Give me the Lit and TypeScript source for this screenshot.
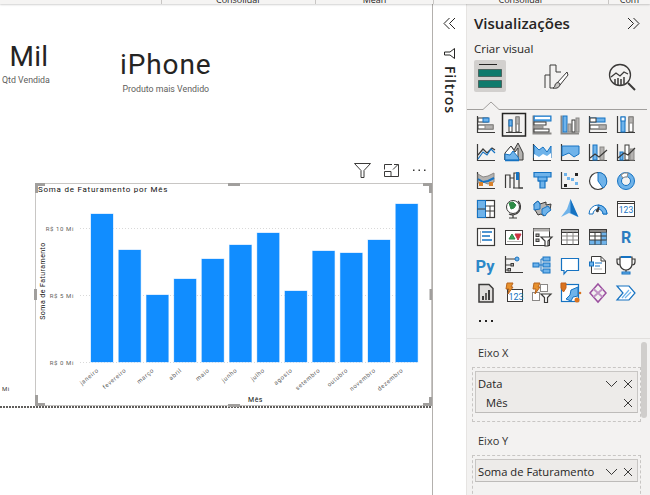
import { LitElement, html, css, svg } from "lit";
import { customElement } from "lit/decorators.js";

const D = "#3b3a39";
const B = "#1673c2";
const L = "#6fb3ea";
const G = "#b5b3b1";
const W = "#ffffff";
const O = "#d9822b";

const r = (x: number, y: number, w: number, h: number, fill = "none", stroke = "none", sw = 1) =>
  svg`<rect x=${x} y=${y} width=${w} height=${h} fill=${fill} stroke=${stroke} stroke-width=${sw}></rect>`;
const p = (d: string, stroke = D, fill = "none", sw = 1) =>
  svg`<path d=${d} stroke=${stroke} fill=${fill} stroke-width=${sw}></path>`;
const axes = p("M5.5 5v16.5H23", D, "none", 1.2);

// the grid of visual types, row by row, drawn in a 28x28 cell
const ICONS = [
  svg`${axes}${r(6, 7, 10, 4, W, D)}${r(11, 7, 6, 4, L, B)}${r(6, 14, 15, 4, W, D)}${r(13, 14, 8, 4, G, "#8a8886")}`,
  svg`${r(2.5, 2.5, 23, 22.5, "none", "#252423", 1.5)}${p("M6 21.5H22")}${r(9, 9, 3, 12, W, D)}${r(9, 9, 3, 6, L, B)}${r(16, 6, 3, 15, W, D)}${r(16, 6, 3, 7, G, "#8a8886")}`,
  svg`${p("M5.5 4.5v18H23.5", "#8a8886", "none", 2)}${r(6, 5, 17, 5, L, B)}${r(7, 6, 15, 2, W)}${r(6, 11, 12, 3, W, D)}${r(6, 15, 9, 2, G, "#8a8886")}${r(6, 18, 15, 3, W, D)}`,
  svg`${p("M5.5 4.5v18H23", "#8a8886", "none", 2)}${r(7, 5, 4, 16, L, B)}${r(12, 13, 3, 8, G, "#8a8886")}${r(16, 9, 3, 12, W, D)}${r(20, 7, 3, 14, G, "#8a8886")}`,
  svg`${axes}${r(6, 7, 15, 4, L, B)}${r(6, 7, 6, 4, W, D)}${r(6, 14, 16, 4, W, D)}${r(15, 14, 7, 4, G, "#8a8886")}`,
  svg`${axes}${r(9, 6, 4, 15, L, B)}${r(9, 6, 4, 4, W, B)}${r(17, 6, 4, 15, W, D)}${r(17, 6, 4, 6, G, "#8a8886")}`,
  svg`${axes}${p("M6 16l5-6 4 4 5-5 3 2", D, "none", 1.2)}${p("M6 20l5-7 4 3 4-6 4 4", B, "none", 1.2)}`,
  svg`${p("M5 21V15l6-8 3 4 4-7 5 10v7z", D, G)}${p("M5 21V14l6-7 4 6 3-4v12z", D, W)}${p("M5 21v-6l5 1 3-4 5 6 1 3z", B, L)}${p("M5 21.5H19", B, "none", 1.5)}`,
  svg`${axes}${p("M6 6l5 5 4-3 4 5 4-6v12H6z", B, L)}${p("M6 15l5 3 4-3 4 2 4-3v7H6z", "none", W)}`,
  svg`${axes}${p("M6 7H23V15l-5 3-5-4-7 3z", B, L)}`,
  svg`${axes}${r(9, 6, 4, 15, L, B)}${r(16, 8, 4, 13, G, "#8a8886")}${p("M6 19l5-4 4 3 8-7", D, "none", 1.2)}`,
  svg`${axes}${r(8, 13, 3, 8, L, B)}${r(13, 6, 4, 15, W, D)}${r(18, 10, 4, 11, G, "#8a8886")}${p("M6 19l6-5 4 2 7-7", D, "none", 1.2)}`,
  svg`${axes}${p("M6 7l5 3 5-1 6-3v9l-6 2-5-2-5 1z", "#8a8886", G)}${p("M6 12l5 3 5-1 6-3", B, "none", 2)}${r(7, 15, 4, 4, O)}${r(17, 15, 4, 4, O)}`,
  svg`${p("M5.5 21V8H10V21M10 21V11H14V21M14 13V6H19V21H23", D, "none", 1.2)}${r(16, 5, 3, 8, B)}${p("M13 21H23", D)}`,
  svg`${p("M6 5.5H23V10H19V14H17V21H12V14H10V10H6z", B, L, 1.2)}${p("M10 10H19M10 14H19", B)}`,
  svg`${axes}${r(8, 6, 3, 3, L)}${r(15, 11, 3, 3, L)}${r(19, 15, 3, 3, L)}${r(11, 10, 3, 3, L)}${r(8, 17, 3, 3, "#252423")}${r(19, 6, 3, 3, "#252423")}`,
  svg`<circle cx="14" cy="14" r="8.5" fill=${W} stroke=${D} stroke-width="1.2"></circle>${p("M14 5.5A8.5 8.5 0 0 1 19 21L14 14z", B, L)}`,
  svg`<circle cx="14" cy="14" r="6.5" fill="none" stroke=${L} stroke-width="4"></circle><circle cx="14" cy="14" r="8.5" fill="none" stroke=${B}></circle><circle cx="14" cy="14" r="4.5" fill="none" stroke=${B}></circle>${p("M9 8A8 8 0 0 1 16 6L15 10A4.5 4.5 0 0 0 11 11z", "#8a8886", W)}`,
  svg`${r(5.5, 5.5, 17, 17, W, D, 1.2)}${r(5.5, 5.5, 8, 17, L, B)}${p("M5.5 14H13.5M13.5 11H22.5M18 11V22.5M13.5 16H22.5", D)}`,
  svg`<circle cx="13" cy="12" r="6.5" fill=${W} stroke=${D}></circle>${p("M9 8l4-1 3 3-2 3-3 1z", "#2e8b47", "#2e8b47")}${p("M18 6a8 8 0 0 1-9 13M13 20v3M9 23H17", D, "none", 1.2)}`,
  svg`${p("M6 9l4-3 2 3 6-2v3l5-1-1 6-4 2-2 4-3-2-3 1-3-5z", D, G)}${p("M6 9l4-3 2 3v5l-6 1z", B, L)}${p("M14 14l6-3 3 4-4 3-2 3-3-2z", B, L)}`,
  svg`${p("M14.5 4L11 14 5 22l8-4 9 4-4-9z", "none", L)}${p("M14.5 4V18l8 4-4-9z", "none", B)}`,
  svg`${p("M5 19a9 9 0 0 1 18 0H19a5 5 0 0 0-10 0z", B, W)}${p("M14 10a9 9 0 0 1 9 9H19a5 5 0 0 0-5-5z", B, L)}${p("M12 16l3-4-1 5z", D, D)}`,
  svg`${r(5.5, 6.5, 17, 15, W, D)}${p("M5.5 8.5H22.5", D, "none", 1)}<text x="14" y="18" text-anchor="middle" font-family="Roboto, sans-serif" font-size="8.5" fill=${B}>123</text>`,
  svg`${r(5.5, 5.5, 17, 17, W, D, 1.2)}${p("M8.5 8V20", G)}${p("M10 9H20M10 13H18M10 17H20", B, "none", 1.7)}`,
  svg`${r(5.5, 7.5, 17, 14, W, D)}${p("M9 16l3-5 3 5z", "#2e8b47", "#3aa35a")}${p("M15 11h6l-3 6z", "#c4314b", "#d13438")}${p("M7 18.5H21", G)}`,
  svg`${r(5.5, 5.5, 16, 17, W, D)}${r(5.5, 5.5, 16, 3, G)}${r(8, 11, 3, 2.5, G, D)}${r(8, 16, 3, 2.5, G, D)}${p("M13 14H24L20 18V23H17V18z", D, W, 1.2)}`,
  svg`${r(5.5, 6.5, 17, 15, W, D)}${r(5.5, 6.5, 17, 3, G, D)}${p("M5.5 13H22.5M5.5 17H22.5M11 9.5V21.5M17 9.5V21.5", "#8a8886")}`,
  svg`${r(5.5, 6.5, 17, 15, W, D)}${r(5.5, 6.5, 17, 3, "#8a8886", D)}${r(17, 9.5, 5.5, 12, L)}${r(5.5, 17, 17, 4.5, L)}${p("M5.5 13H22.5M5.5 17H22.5M11 9.5V21.5M17 9.5V21.5", D)}`,
  svg`<text x="14" y="20" text-anchor="middle" font-family="Roboto, sans-serif" font-weight="700" font-size="16" fill="#2b7cc0">R</text>`,
  svg`<text x="13" y="21" text-anchor="middle" font-family="Roboto, sans-serif" font-weight="700" font-size="16.5" fill="#2b88c8">Py</text>`,
  svg`${axes}${p("M5.5 8H15M5.5 14H11M5.5 19H8", D)}<circle cx="17" cy="8" r="2" fill=${L} stroke=${B}></circle>${r(11, 12.5, 2.5, 2.5, G, D)}${r(8, 17.5, 2.5, 2.5, G, D)}`,
  svg`${r(5, 12, 6, 4, L, B)}${r(15, 6, 7, 4, L, B)}${r(15, 12, 7, 4, L, B)}${r(15, 18, 7, 4, L, B)}${p("M11 14H15M13 8V20M13 8H15M13 20H15", B)}`,
  svg`${p("M5.5 7.5H22.5V19.5H11L8 23V19.5H5.5z", B, W, 1.2)}`,
  svg`${p("M7.5 5.5H17L21.5 10V22.5H7.5z", D, W)}${p("M17 5.5V10H21.5", D)}${r(5.5, 11, 4, 4, L, B)}${p("M11 12H18M11 15H16", B)}${p("M10 18H18", G)}`,
  svg`${p("M8 6H20V13A6 6 0 0 1 8 13z", D, W, 1.2)}${r(9, 5, 10, 2, B)}${p("M8 8H5V11A3 3 0 0 0 8 14M20 8H23V11A3 3 0 0 1 20 14M14 19V21", D, "none", 1.2)}${r(10, 21, 8, 2, L, B)}`,
  svg`${p("M7 5.5H17L21 9.5V23H7z", D, "#e1dfdd", 1.5)}${r(10, 17, 2, 4, D)}${r(13, 14, 2, 7, "#605e5c")}${r(16, 11, 2, 10, D)}`,
  svg`${r(7.5, 10.5, 15, 12, W, D)}<text x="16" y="20.5" text-anchor="middle" font-family="Roboto, sans-serif" font-size="9" fill=${B}>123</text>${p("M7 4h6l-2 4h2l-5 7 1-5H6z", "#b8651d", "#e8912d")}`,
  svg`${r(12.5, 5.5, 7, 7, W, "#8a8886")}${r(4.5, 13.5, 7, 8, W, "#8a8886")}${p("M13 15H23L19.5 18.5V23.5H16.5V18.5z", D, W, 1.2)}${p("M6 4h6l-2 4h2l-5 7 1-5H5z", "#b8651d", "#e8912d")}`,
  svg`${r(5.5, 5.5, 17, 17, W, B, 1.2)}${p("M10 20l4-4 1-5 7-3v9l-5 1-2 4z", B, L)}${p("M5 4h5v5l-2.5 4L5 9z", "#c5611a", "#d9731f")}<circle cx="21" cy="21" r="2.5" fill="#d9731f"></circle><circle cx="24" cy="14" r="1.3" fill="#d9731f"></circle>`,
  svg`${p("M14 5l8 9-8 9-8-9z", "#9b4f9f", "none", 1.5)}${p("M9.5 10l9 8M18.5 10l-9 8", "#c193c5", "none", 2)}`,
  svg`${p("M5 7H17L23 14 17 21H5L11 14z", B, W, 1.2)}${p("M13 19l6-6M10 19l7-8", L, "none", 1.2)}`,
  svg`${r(7, 13, 2, 2, "#252423")}${r(13, 13, 2, 2, "#252423")}${r(19, 13, 2, 2, "#252423")}`,
];

const MONTHS = [
  ["janeiro", 214], ["fevereiro", 250], ["março", 295], ["abril", 279],
  ["maio", 259], ["junho", 245], ["julho", 233], ["agosto", 291],
  ["setembro", 251], ["outubro", 253], ["novembro", 240], ["dezembro", 204],
] as [string, number][];

const X = svg`<path d="M1 1l8 8M9 1l-8 8" stroke="#3b3a39" fill="none"></path>`;
const V = svg`<path d="M1 2l5.5 5.5L12 2" stroke="#3b3a39" fill="none"></path>`;

@customElement("app-root")
export class AppRoot extends LitElement {
  static styles = css`
    :host {
      display: block;
      width: 650px;
      height: 495px;
      overflow: hidden;
      background: #fff;
      font-family: "Open Sans", "Noto Sans", sans-serif;
      color: #252423;
    }
    .ribbon {
      height: 4px;
      background: #f5f4f3;
      box-shadow: 0 1px 2px rgba(0, 0, 0, 0.18);
      position: relative;
      z-index: 2;
      overflow: hidden;
      display: flex;
    }
    .rib-cell {
      box-sizing: border-box;
      height: 4px;
      border-right: 1px solid #c8c6c4;
      font: 9px/1 "Open Sans", sans-serif;
      text-align: center;
      color: #252423;
    }
    .rib-cell span {
      display: block;
      margin-top: -5px;
    }
    .main {
      display: flex;
      height: 491px;
    }
    .canvas {
      position: relative;
      width: 433px;
      box-sizing: border-box;
      border-right: 1px solid #b3b0ad;
      flex: none;
      overflow: hidden;
    }
    .kpi {
      position: absolute;
      font-family: Roboto, sans-serif;
      text-align: center;
      white-space: nowrap;
    }
    .kpi b {
      display: block;
      font-weight: 400;
      font-size: 28px;
      line-height: 30px;
      letter-spacing: 0.9px;
      color: #252423;
    }
    .kpi small {
      display: block;
      font-size: 8.8px;
      line-height: 11px;
      margin-top: 4px;
      color: #605e5c;
    }
    .mil {
      left: 2px;
      top: 38px;
    }
    .mil b {
      padding-left: 6px;
      letter-spacing: 0.3px;
    }
    .mil small {
      margin-top: 3px;
    }
    .iphone {
      left: 120px;
      top: 46px;
    }
    .tools {
      position: absolute;
      left: 354px;
      top: 159px;
      display: flex;
      align-items: center;
      gap: 13px;
    }
    .tools svg {
      display: block;
    }
    .chart {
      position: absolute;
      left: 0;
      top: 0;
    }
    .chart text {
      font-family: Roboto, sans-serif;
    }
    .tick {
      font-size: 6px;
      letter-spacing: 0.6px;
      fill: #605e5c;
    }
    .ttl {
      font-size: 8px;
      letter-spacing: 0.75px;
      fill: #111;
    }
    .axis-ttl {
      font-size: 7px;
      letter-spacing: 0.45px;
      fill: #111;
    }
    .filters {
      width: 33px;
      flex: none;
      display: flex;
      flex-direction: column;
      align-items: center;
      background: #fff;
    }
    .filters svg {
      display: block;
    }
    .filters .collapse {
      margin-top: 13px;
    }
    .filters .funnel {
      margin-top: 18px;
    }
    .filters span {
      writing-mode: vertical-rl;
      font-size: 14px;
      font-weight: 600;
      letter-spacing: 0.8px;
      line-height: 20px;
      margin-top: 7px;
      color: #252423;
    }
    .panel {
      flex: 1;
      background: #f3f2f1;
      position: relative;
      box-sizing: border-box;
      border-left: 1px solid #e6e4e2;
    }
    .head {
      display: flex;
      align-items: center;
      justify-content: space-between;
      height: 20px;
      margin-top: 9px;
      padding: 0 10px 0 7px;
      font-size: 15px;
      font-weight: 600;
      color: #252423;
    }
    .sub {
      margin: 8px 0 0 7px;
      font-size: 11.5px;
      line-height: 16px;
      color: #252423;
    }
    .tabs {
      display: flex;
      margin: 3px 0 0 7px;
      height: 32px;
    }
    .tab {
      width: 32px;
      height: 32px;
      flex: none;
      border-radius: 2px;
    }
    .tab.on {
      background: #d2d0ce;
    }
    .tab + .tab {
      margin-left: 34px;
    }
    .tab svg {
      display: block;
    }
    .notch {
      display: block;
      margin-top: 9px;
    }
    .grid {
      display: grid;
      grid-template-columns: repeat(6, 28px);
      grid-auto-rows: 28px;
      margin: 1px 0 0 5px;
    }
    .grid svg {
      display: block;
    }
    .fields {
      margin-top: 3px;
      border-top: 1px solid #e1dfdd;
      padding: 6px 9px 0 5px;
    }
    .label {
      font-size: 11px;
      line-height: 16px;
      margin-left: 6px;
      color: #323130;
    }
    .well {
      border: 1px dashed #c8c6c4;
      padding: 3px 2px;
      margin-top: 6px;
      height: 36px;
      box-sizing: content-box;
    }
    .well.tall {
      height: 47px;
    }
    .well + .label {
      margin-top: 11px;
    }
    .field {
      background: #edebe9;
      border: 1px solid #c8c6c4;
      border-bottom-color: #bdbbb9;
      padding: 2px 4px 0 2px;
      font-size: 11.2px;
    }
    .row {
      display: flex;
      align-items: center;
      height: 19px;
      gap: 5px;
      color: #252423;
    }
    .row span {
      flex: 1;
      white-space: nowrap;
    }
    .row.child span {
      padding-left: 8px;
    }
    .row svg {
      flex: none;
      display: block;
    }
    .thumb {
      position: absolute;
      right: 3px;
      top: 338px;
      width: 6px;
      height: 76px;
      border-radius: 3px;
      background: #d0cecc;
    }
  `;

  chart() {
    const handle = "#a19f9d";
    return html`<svg class="chart" width="432" height="420" viewBox="0 0 432 420">
      ${svg`
      <rect x="35.5" y="179.5" width="396" height="222" fill="#fff" stroke="#c8c6c4"></rect>
      <text class="ttl" x="38" y="188">Soma de Faturamento por Mês</text>
      ${[224, 291, 358].map((y) => svg`<path d="M80 ${y}.5H419" stroke="#d9d9d9" stroke-dasharray="1 2"></path>`)}
      <text class="tick" x="74" y="226.5" text-anchor="end">R$ 10 Mi</text>
      <text class="tick" x="74" y="293.5" text-anchor="end">R$ 5 Mi</text>
      <text class="tick" x="74" y="360.5" text-anchor="end">R$ 0 Mi</text>
      <text class="axis-ttl" transform="translate(45 277) rotate(-90)" text-anchor="middle">Soma de Faturamento</text>
      ${MONTHS.map(([name, top], i) => {
        const x = 91 + i * 27.7;
        const y = top - 4;
        return svg`
          <rect x=${x - 0.5} y=${y - 0.5} width="23" height=${359 - y} fill="#b9dcff"></rect>
          <rect x=${x} y=${y} width="22" height=${358 - y} fill="#118dff"></rect>
          <text class="tick" text-anchor="end" transform="translate(${x + 8} 367) rotate(-40)">${name}</text>`;
      })}
      <text class="axis-ttl" x="255.5" y="398" text-anchor="middle">Mês</text>
      <path d="M0 403H432" stroke="#605e5c" stroke-width="2" stroke-dasharray="2 1"></path>
      <path d="M45 180.5H36.5V189" stroke=${handle} stroke-width="3" fill="none"></path>
      <path d="M423 180.5H430.5V189" stroke=${handle} stroke-width="3" fill="none"></path>
      <path d="M36.5 391V400.5H45" stroke=${handle} stroke-width="3" fill="none"></path>
      <path d="M430.5 393V400.5H423" stroke=${handle} stroke-width="3" fill="none"></path>
      <path d="M228 180.5H240M228 401.5H240M35.5 285V296M431 285V296" stroke=${handle} stroke-width="3"></path>
      <text class="tick" x="2" y="387" style="fill:#3b3a39">Mi</text>
      `}
    </svg>`;
  }

  render() {
    return html`
      <div class="ribbon">
        <div class="rib-cell" style="width:162px"></div>
        <div class="rib-cell" style="width:154px"><span>Consolidar</span></div>
        <div class="rib-cell" style="width:118px"><span>Mean</span></div>
        <div class="rib-cell" style="width:175px"><span>Consolidar</span></div>
        <div class="rib-cell" style="width:41px;border:0"><span>Com</span></div>
      </div>
      <div class="main">
        <div class="canvas">
          ${this.chart()}
          <div class="kpi mil"><b>Mil</b><small>Qtd Vendida</small></div>
          <div class="kpi iphone"><b>iPhone</b><small>Produto mais Vendido</small></div>
          <div class="tools">
            <svg width="17" height="15" viewBox="0 0 17 15"><path d="M.5.5h16L10 7.5V14.5H7V7.5z" fill="none" stroke="#3b3a39"></path></svg>
            <svg width="15" height="13" viewBox="0 0 15 13"><path d="M.5 5.5V.5H8M14.5 5V12.5H7M.5 7.5H7V12.5H.5zM9 5.5L14 .5M10 .5H14.5V5" fill="none" stroke="#3b3a39"></path></svg>
            <svg width="15" height="3" viewBox="0 0 15 3"><path d="M1 .5h1.5v1.5H1zM6.5 .5H8v1.5H6.5zM12 .5h1.500v1.500H12z" fill="#3b3a39"></path></svg>
          </div>
        </div>
        <div class="filters">
          <svg class="collapse" width="13" height="13" viewBox="0 0 13 13"><path d="M6.500 1L1 6.500 6.500 12M12 1L6.500 6.500 12 12" fill="none" stroke="#252423"></path></svg>
          <svg class="funnel" width="11" height="11" viewBox="0 0 11 11"><path d="M10.500 .5V10.500L6 7H.5V4H6z" fill="none" stroke="#252423"></path></svg>
          <span>Filtros</span>
        </div>
        <div class="panel">
          <div class="head">
            <span>Visualizações</span>
            <svg width="13" height="13" viewBox="0 0 13 13"><path d="M1 1l5.500 5.500L1 12M6.500 1L12 6.500 6.500 12" fill="none" stroke="#252423"></path></svg>
          </div>
          <div class="sub">Criar visual</div>
          <div class="tabs">
            <div class="tab on">
              <svg width="32" height="32" viewBox="0 0 32 32">
                <path d="M5 4.500H23" stroke="#252423"></path>
                <rect x="4.500" y="9.500" width="23" height="7" fill="#0e7a6c" stroke="#252423" stroke-dasharray="1 1"></rect>
                <rect x="4.500" y="20.500" width="23" height="7" fill="#0e7a6c" stroke="#252423" stroke-dasharray="1 1"></rect>
              </svg>
            </div>
            <div class="tab">
              <svg width="32" height="32" viewBox="0 0 32 32" fill="none" stroke="#3b3a39">
                <path d="M5 28V15H10V5H16V12H21M10 15V28H14"></path>
                <path d="M27 12L17 23 20 25 28 15z" fill="#fff"></path>
                <path d="M15 25c1-3 4-3 5-1 0 3-3 5-7 4 1-1 2-1 2-3z" fill="#c8c6c4"></path>
              </svg>
            </div>
            <div class="tab">
              <svg width="32" height="32" viewBox="0 0 32 32" fill="none" stroke="#3b3a39">
                <circle cx="14" cy="15" r="10.500" stroke-width="1.300"></circle>
                <path d="M5 17l5-4 4 3 4-4 4 2" stroke-width="1.300"></path>
                <path d="M9 19v5M12 18v7M15 19v6M18 17v7" stroke-width="1.500"></path>
                <path d="M22 23l7 7" stroke-width="2"></path>
              </svg>
            </div>
          </div>
          <svg class="notch" width="180" height="9" viewBox="0 0 180 9">
            <path d="M0 8.500H16L24 1 32 8.500H180" fill="none" stroke="#a19f9d"></path>
          </svg>
          <div class="grid">
            ${ICONS.map((i) => html`<svg width="28" height="28" viewBox="0 0 28 28">${i}</svg>`)}
          </div>
          <div class="fields">
            <div class="label">Eixo X</div>
            <div class="well tall">
              <div class="field">
                <div class="row"><span>Data</span><svg width="13" height="10" viewBox="0 0 13 10">${V}</svg><svg width="10" height="10" viewBox="0 0 10 10">${X}</svg></div>
                <div class="row child"><span>Mês</span><svg width="10" height="10" viewBox="0 0 10 10">${X}</svg></div>
              </div>
            </div>
            <div class="label">Eixo Y</div>
            <div class="well">
              <div class="field">
                <div class="row"><span>Soma de Faturamento</span><svg width="13" height="10" viewBox="0 0 13 10">${V}</svg><svg width="10" height="10" viewBox="0 0 10 10">${X}</svg></div>
              </div>
            </div>
          </div>
          <div class="thumb"></div>
        </div>
      </div>
    `;
  }
}
